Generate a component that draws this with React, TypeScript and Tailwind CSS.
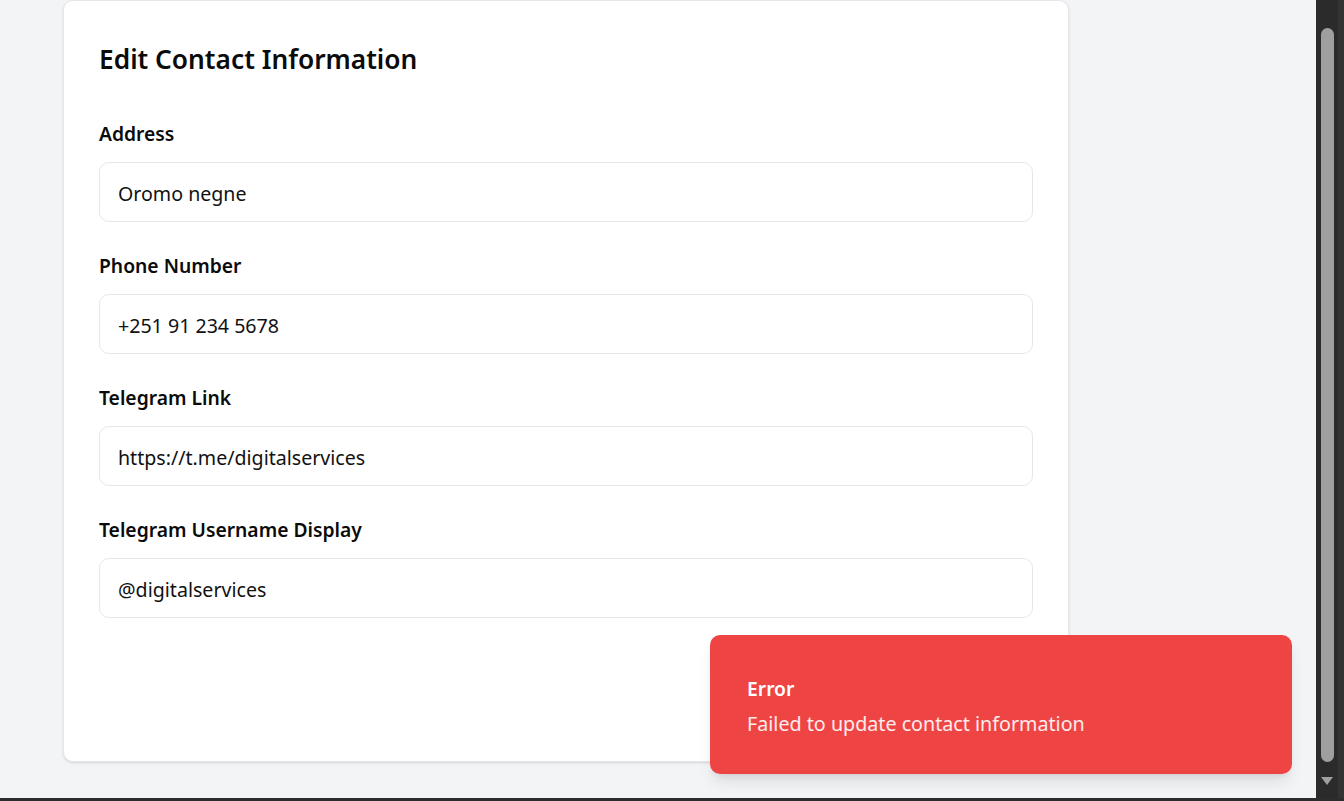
import React from 'react';

const fields = [
    { label: 'Address', value: 'Oromo negne' },
    { label: 'Phone Number', value: '+251 91 234 5678' },
    { label: 'Telegram Link', value: 'https://t.me/digitalservices' },
    { label: 'Telegram Username Display', value: '@digitalservices' },
];

export default function App() {
    return (
        <div className="h-[801px] flex flex-col overflow-hidden bg-gray-100 font-['Noto_Sans',sans-serif]">
            <div className="flex flex-1 min-h-0">
                <main className="relative flex-1">
                    <div className="ml-[63px] w-[1006px] bg-white rounded-[10px] border border-gray-200 shadow-sm px-[35px] pt-[40px] pb-[143px]">
                        <h2 className="text-[26.3px] leading-[36px] font-semibold text-[#0b0b0b]">Edit Contact Information</h2>

                        <form className="mt-[43px] flex flex-col gap-[30px]">
                            {fields.map((f) => (
                                <div key={f.label}>
                                    <label className="block text-[19.3px] leading-[28px] font-semibold text-[#0b0b0b]">{f.label}</label>
                                    <input
                                        type="text"
                                        defaultValue={f.value}
                                        className="mt-[14px] w-full h-[60px] px-[18px] pt-[3px] rounded-[10px] border border-gray-200 bg-white text-[19.6px] text-[#111] outline-none"
                                    />
                                </div>
                            ))}
                        </form>
                    </div>

                    {/* toast */}
                    <div className="absolute right-[24px] bottom-[24px] w-[582px] h-[139px] rounded-[10px] bg-[#ef4444] shadow-lg px-[37px] pt-[40px]">
                        <div className="text-[19.3px] leading-[28px] font-semibold text-white">Error</div>
                        <div className="mt-[7px] text-[19.7px] leading-[28px] text-white/90">Failed to update contact information</div>
                    </div>
                </main>

                {/* browser scrollbar */}
                <aside className="w-[28px] flex bg-[#2b2b2b]">
                    <div className="w-[22px] flex flex-col items-center pt-[28px] pb-[12px]">
                        <div className="w-[13px] flex-1 rounded-full bg-[#9f9f9f]" />
                        <svg width="14" height="10" viewBox="0 0 14 10" className="mt-[14px]">
                            <path d="M1 1 H13 L7 9 Z" fill="#9f9f9f" />
                        </svg>
                    </div>
                    <div className="flex-1 bg-[#333333]" />
                </aside>
            </div>
            <div className="h-[3px] bg-[#2d2d2d]" />
        </div>
    );
}
